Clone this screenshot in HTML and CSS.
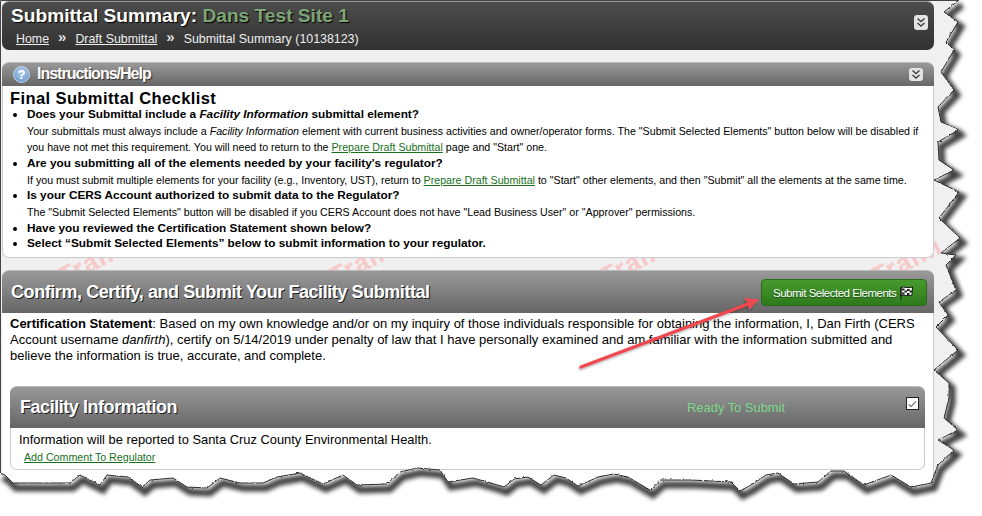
FILE: index.html
```html
<!DOCTYPE html>
<html lang="en">
<head>
<meta charset="utf-8">
<title>Submittal Summary</title>
<link rel="stylesheet" href="styles.css">
</head>
<body>
<div class="shot">
  <main class="page">
    <svg class="watermark" width="982" height="516" aria-hidden="true">
      <text x="64" y="286" class="wm-text" transform="rotate(-27 64 286)">Traini</text>
      <text x="335" y="286" class="wm-text" transform="rotate(-27 335 286)">Traini</text>
      <text x="606" y="286" class="wm-text" transform="rotate(-27 606 286)">Traini</text>
      <text x="877" y="286" class="wm-text" transform="rotate(-27 877 286)">Traini</text>
    </svg>

    <header class="top-bar">
      <div class="top-text">
        <h1 class="page-title">Submittal Summary: <span class="site-name">Dans Test Site 1</span></h1>
        <nav class="crumbs">
          <a href="#">Home</a><span class="crumb-sep">»</span><a href="#">Draft Submittal</a><span class="crumb-sep">»</span><span class="crumb-now">Submittal Summary (10138123)</span>
        </nav>
      </div>
      <button class="toggle toggle-top" type="button" aria-label="Collapse">
        <svg width="12" height="12" viewBox="0 0 12 12"><path d="M2.500 1.500 6 4.500l3.500-3M2.500 6 6 9l3.500-3" class="chev"/></svg>
      </button>
    </header>

    <section class="panel help">
      <div class="panel-head help-head">
        <svg class="help-icon" width="17" height="17" viewBox="0 0 17 17" aria-hidden="true">
          <defs><radialGradient id="hb" cx="50%" cy="35%" r="65%"><stop offset="0" stop-color="#b4cdec"/><stop offset="1" stop-color="#6f9cd2"/></radialGradient></defs>
          <circle cx="8.500" cy="8.500" r="8" fill="url(#hb)" stroke="#d6e0ec" stroke-width=".8"/>
          <text x="8.500" y="12.600" text-anchor="middle" class="help-q">?</text>
        </svg>
        <h2 class="help-title">Instructions/Help</h2>
        <button class="toggle toggle-help" type="button" aria-label="Collapse">
          <svg width="12" height="12" viewBox="0 0 12 12"><path d="M2.500 1.500 6 4.500l3.500-3M2.500 6 6 9l3.500-3" class="chev"/></svg>
        </button>
      </div>
      <div class="help-body">
        <h3 class="check-title">Final Submittal Checklist</h3>
        <ul class="checklist">
          <li>Does your Submittal include a <em>Facility Information</em> submittal element?
            <p>Your submittals must always include a <em>Facility Information</em> element with current business activities and owner/operator forms. The "Submit Selected Elements" button below will be disabled if you have not met this requirement. You will need to return to the <a href="#">Prepare Draft Submittal</a> page and "Start" one.</p></li>
          <li>Are you submitting all of the elements needed by your facility's regulator?
            <p>If you must submit multiple elements for your facility (e.g., Inventory, UST), return to <a href="#">Prepare Draft Submittal</a> to "Start" other elements, and then "Submit" all the elements at the same time.</p></li>
          <li>Is your CERS Account authorized to submit data to the Regulator?
            <p>The "Submit Selected Elements" button will be disabled if you CERS Account does not have "Lead Business User" or "Approver" permissions.</p></li>
          <li>Have you reviewed the Certification Statement shown below?</li>
          <li>Select “Submit Selected Elements” below to submit information to your regulator.</li>
        </ul>
      </div>
    </section>

    <section class="panel confirm">
      <div class="panel-head big-head">
        <h2 class="big-title">Confirm, Certify, and Submit Your Facility Submittal</h2>
        <button class="submit" type="button">Submit Selected Elements
          <svg width="15" height="15" viewBox="0 0 15 15" aria-hidden="true">
            <path d="M2 2.500C5 1 9 4 13.500 2l-.5 8C9 12 5.500 9 2 10.500zM2 2v12.500" fill="#fff" stroke="#111"/>
            <path d="M3 3.500h2.500v2H3zM8 4h2.500v2H8zM5.500 5.500H8v2H5.500zM10.500 5.500H13v2h-2.500zM3 7.500h2.500v2H3zM8 8h2.500v2H8z" fill="#222"/>
          </svg>
        </button>
      </div>
      <p class="cert"><strong>Certification Statement</strong>: Based on my own knowledge and/or on my inquiry of those individuals responsible for obtaining the information, I, Dan Firth (CERS Account username <em>danfirth</em>), certify on 5/14/2019 under penalty of law that I have personally examined and am familiar with the information submitted and believe the information is true, accurate, and complete.</p>

      <section class="panel facility">
        <div class="panel-head fac-head">
          <h2 class="big-title fac-title">Facility Information</h2>
          <span class="ready">Ready To Submit</span>
          <span class="check-box">
            <svg width="13" height="13" viewBox="0 0 13 13" aria-hidden="true"><path d="M2 6 4.500 9 10.500 3" fill="none" stroke="#777" stroke-width="1.400"/></svg>
          </span>
        </div>
        <div class="fac-body">
          <p class="fac-text">Information will be reported to Santa Cruz County Environmental Health.</p>
          <a class="fac-link" href="#">Add Comment To Regulator</a>
        </div>
      </section>
    </section>
  </main>

  <svg class="overlay" width="982" height="516" aria-hidden="true">
    <defs>
      <filter id="rough" x="-2%" y="-2%" width="104%" height="104%">
        <feTurbulence type="fractalNoise" baseFrequency="0.35" numOctaves="2" seed="4"/>
        <feDisplacementMap in="SourceGraphic" scale="2.500" xChannelSelector="R" yChannelSelector="G"/>
      </filter>
      <filter id="soft" x="-5%" y="-5%" width="110%" height="110%"><feGaussianBlur stdDeviation="2.200"/></filter>
      <clipPath id="outside"><path d="M959 0 944 12 958 22 946 42 954 50 941 72 954 90 938 107 941 122 956 128 958 130 938 142 939 160 954 170 934 180 959 192 939 218 960 238 941 253 956 255 946 265 956 290 939 302 948 315 936 327 958 350 934 370 949 383 949 398 944 418 958 430 938 440 954 450 938 465 931 483 911 487 891 475 864 485 844 471 831 471 818 482 794 484 778 473 766 475 751 485 740 491 731 482 691 480 661 480 650 490 628 477 614 474 598 477 578 486 566 478 554 475 541 485 528 477 514 479 504 487 491 483 473 478 448 482 440 470 417 468 400 472 387 484 357 485 343 475 323 484 300 473 277 477 263 483 240 483 220 478 207 488 187 487 173 478 150 480 142 487 128 477 107 475 100 485 80 475 70 483 33 483 13 483 5 475 0 473V516H982V0Z"/></clipPath>
      <filter id="arrow-shadow" x="-10%" y="-20%" width="120%" height="140%"><feDropShadow dx="-1" dy="1.500" stdDeviation="1" flood-color="#000" flood-opacity=".35"/></filter>
    </defs>
    <g class="arrow" filter="url(#arrow-shadow)">
      <path d="M581 367 748 304" class="arrow-line"/>
      <path d="M759 299.500 744 298 748 304 749 310Z" class="arrow-head"/>
    </g>
    <g filter="url(#rough)">
      <path class="outside-fill" d="M959 0 944 12 958 22 946 42 954 50 941 72 954 90 938 107 941 122 956 128 958 130 938 142 939 160 954 170 934 180 959 192 939 218 960 238 941 253 956 255 946 265 956 290 939 302 948 315 936 327 958 350 934 370 949 383 949 398 944 418 958 430 938 440 954 450 938 465 931 483 911 487 891 475 864 485 844 471 831 471 818 482 794 484 778 473 766 475 751 485 740 491 731 482 691 480 661 480 650 490 628 477 614 474 598 477 578 486 566 478 554 475 541 485 528 477 514 479 504 487 491 483 473 478 448 482 440 470 417 468 400 472 387 484 357 485 343 475 323 484 300 473 277 477 263 483 240 483 220 478 207 488 187 487 173 478 150 480 142 487 128 477 107 475 100 485 80 475 70 483 33 483 13 483 5 475 0 473V516H982V0Z"/>
    </g>
    <g clip-path="url(#outside)">
      <path class="tear-shadow" filter="url(#soft)" transform="translate(3 5)" d="M959 0 944 12 958 22 946 42 954 50 941 72 954 90 938 107 941 122 956 128 958 130 938 142 939 160 954 170 934 180 959 192 939 218 960 238 941 253 956 255 946 265 956 290 939 302 948 315 936 327 958 350 934 370 949 383 949 398 944 418 958 430 938 440 954 450 938 465 931 483 911 487 891 475 864 485 844 471 831 471 818 482 794 484 778 473 766 475 751 485 740 491 731 482 691 480 661 480 650 490 628 477 614 474 598 477 578 486 566 478 554 475 541 485 528 477 514 479 504 487 491 483 473 478 448 482 440 470 417 468 400 472 387 484 357 485 343 475 323 484 300 473 277 477 263 483 240 483 220 478 207 488 187 487 173 478 150 480 142 487 128 477 107 475 100 485 80 475 70 483 33 483 13 483 5 475 0 473"/>
    </g>
    <g filter="url(#rough)">
      <path class="tear-line" d="M959 0 944 12 958 22 946 42 954 50 941 72 954 90 938 107 941 122 956 128 958 130 938 142 939 160 954 170 934 180 959 192 939 218 960 238 941 253 956 255 946 265 956 290 939 302 948 315 936 327 958 350 934 370 949 383 949 398 944 418 958 430 938 440 954 450 938 465 931 483 911 487 891 475 864 485 844 471 831 471 818 482 794 484 778 473 766 475 751 485 740 491 731 482 691 480 661 480 650 490 628 477 614 474 598 477 578 486 566 478 554 475 541 485 528 477 514 479 504 487 491 483 473 478 448 482 440 470 417 468 400 472 387 484 357 485 343 475 323 484 300 473 277 477 263 483 240 483 220 478 207 488 187 487 173 478 150 480 142 487 128 477 107 475 100 485 80 475 70 483 33 483 13 483 5 475 0 473"/>
    </g>
    <path class="edge-line" d="M.5 473V.5H959"/>
  </svg>
</div>
</body>
</html>
```

FILE: styles.css
```css
* { box-sizing: border-box; }
html, body { margin: 0; padding: 0; background: #fff; }
body { font-family: "Liberation Sans", Arial, sans-serif; color: #000; overflow: hidden; }
h1, h2, h3, p, ul { margin: 0; padding: 0; }
.shot { position: relative; width: 982px; height: 516px; overflow: hidden; background: #fff; }

.watermark { position: absolute; left: 0; top: 0; }
.wm-text { font: bold 26px "Liberation Sans", Arial, sans-serif; fill: #f7c9c9; letter-spacing: 1px; }

.page { position: relative; display: flex; flex-direction: column; gap: 12px; width: 962px; height: 490px; padding: 1px 28px 0 2px; background: #f0f0f0; }

.top-bar { position: relative; display: flex; justify-content: space-between; align-items: flex-start; height: 49px; padding: 2px 6px 0 9px; border-radius: 7px; background: linear-gradient(#4c4c4c, #323232); border-top: 1px solid #999; }
.page-title { font-size: 19.150px; line-height: 23px; font-weight: bold; color: #fff; text-shadow: 1px 1px 1px #000; }
.site-name { color: #7da678; }
.crumbs { display: flex; margin: 4px 0 0 5px; font-size: 12.400px; line-height: 16px; color: #eee; }
.crumbs a { color: #eee; }
.crumb-sep { margin: -2px 9px 0; font-size: 15px; font-weight: bold; color: #ddd; }

.toggle { display: flex; align-items: center; justify-content: center; width: 14px; height: 15px; padding: 0; border: 0; border-radius: 3px; background: #e4e4e4; }
.toggle-top { margin-top: 11px; }
.chev { fill: none; stroke: #444; stroke-width: 1.500; }

.panel { position: relative; background: #fff; border-radius: 7px 7px 0 0; }
.panel-head { display: flex; align-items: center; background: linear-gradient(#999, #666); border-top: 1px solid #bbb; border-radius: 7px 7px 0 0; }
.help { height: 196px; border: 1px solid #ccc; border-top: 0; border-radius: 7px; }
.help-head { height: 24px; margin: 0 -1px; padding: 0 6px 0 11px; }
.help-icon { flex: none; }
.help-title { margin: -2px 0 0 7px; font-size: 16px; letter-spacing: -1px; font-weight: bold; color: #fff; text-shadow: 1px 1px 1px #333; }
.toggle-help { margin-left: auto; margin-right: 5px; height: 13px; }

.help-body { padding: 4px 8px 0 7px; }
.check-title { font-size: 16.500px; line-height: 17px; letter-spacing: .4px; font-weight: bold; }
.checklist { list-style: disc; padding-left: 17px; font-size: 11.800px; line-height: 15.500px; font-weight: bold; }
.checklist p { font-size: 10.670px; line-height: 16.800px; font-weight: normal; }
.checklist a { color: #176f1c; }

.confirm { flex: 1; border-right: 1px solid #ccc; display: flex; flex-direction: column; align-items: stretch; }
.big-head { flex: none; justify-content: space-between; height: 43px; padding: 0 7px 0 9px; margin-right: -1px; }
.big-title { font-size: 18px; letter-spacing: -.43px; font-weight: bold; color: #fff; text-shadow: 1px 1px 0 #222; }
.fac-title { letter-spacing: -.45px; margin-top: -1px; }
.submit { display: flex; align-items: center; gap: 3px; flex: none; height: 27px; width: 166px; padding: 0 0 0 11px; margin-top: 1px; border: 1px solid #2a6a1b; border-radius: 4px; background: linear-gradient(#489a2e, #2d7a1c); font: 11.500px "Liberation Sans", Arial, sans-serif; letter-spacing: -.48px; color: #fff; text-shadow: 0 1px 1px #1c4a12; white-space: nowrap; }

.cert { padding: 3px 8px 0 8px; font-size: 13px; line-height: 16px; height: 73px; }
.facility { margin: 0 8px; height: 84px; border: 1px solid #ccc; border-top: 0; border-radius: 7px; }
.fac-head { height: 42px; margin: 0 -1px; padding: 0 6px 0 10px; }
.ready { margin-left: auto; margin-right: 121px; font-size: 12.900px; color: #7bd888; }
.check-box { display: flex; flex: none; width: 13px; height: 13px; margin-top: -8px; border: 1px solid #222; background: #fff; }
.fac-body { padding: 4px 0 0 8px; }
.fac-text { font-size: 12.900px; line-height: 16px; }
.fac-link { display: block; margin: 2px 0 0 5px; font-size: 10.670px; line-height: 14px; color: #176f1c; }

.overlay { position: absolute; left: 0; top: 0; }
.help-q { font: bold 13px "Liberation Sans", Arial, sans-serif; fill: #fff; }
.arrow-line { fill: none; stroke: #ef4a50; stroke-width: 3.400; stroke-linecap: round; }
.arrow-head { fill: #ef4a50; }
.outside-fill { fill: #fff; }
.tear-shadow { fill: none; stroke: #000; stroke-width: 7; opacity: .75; }
.tear-line { fill: none; stroke: #2c2c2c; stroke-width: 1; }
.edge-line { fill: none; stroke: #444; stroke-width: 1; }
```
